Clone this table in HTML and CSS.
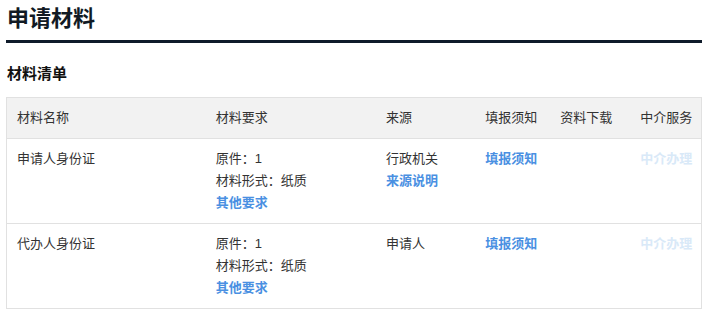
FILE: index.html
```html
<!DOCTYPE html>
<html lang="zh-CN">
<head>
<meta charset="utf-8">
<title>申请材料</title>
<link rel="stylesheet" href="styles.css">
</head>
<body>
<div class="page">
  <h1 class="title">申请材料</h1>
  <h2 class="subtitle">材料清单</h2>
  <table class="materials">
    <colgroup>
      <col class="c-name">
      <col class="c-req">
      <col class="c-src">
      <col class="c-note">
      <col class="c-dl">
      <col class="c-svc">
    </colgroup>
    <thead>
      <tr>
        <th>材料名称</th>
        <th>材料要求</th>
        <th>来源</th>
        <th>填报须知</th>
        <th>资料下载</th>
        <th>中介服务</th>
      </tr>
    </thead>
    <tbody>
      <tr>
        <td>申请人身份证</td>
        <td>
          <div>原件：1</div>
          <div>材料形式：纸质</div>
          <div><a class="link" href="#">其他要求</a></div>
        </td>
        <td>
          <div>行政机关</div>
          <div><a class="link" href="#">来源说明</a></div>
        </td>
        <td><a class="link" href="#">填报须知</a></td>
        <td></td>
        <td><span class="link-disabled">中介办理</span></td>
      </tr>
      <tr>
        <td>代办人身份证</td>
        <td>
          <div>原件：1</div>
          <div>材料形式：纸质</div>
          <div><a class="link" href="#">其他要求</a></div>
        </td>
        <td>
          <div>申请人</div>
        </td>
        <td><a class="link" href="#">填报须知</a></td>
        <td></td>
        <td><span class="link-disabled">中介办理</span></td>
      </tr>
    </tbody>
  </table>
</div>
</body>
</html>
```

FILE: styles.css
```css
html, body {
  margin: 0;
  padding: 0;
  background: #ffffff;
}

body {
  font-family: "Liberation Sans", "Noto Sans CJK SC", sans-serif;
  color: #333333;
  font-size: 13px;
}

.page {
  padding: 0 5px 0 6px;
}

.title {
  margin: 0;
  padding: 4px 1px 6px;
  font-size: 22px;
  line-height: 30px;
  font-weight: bold;
  color: #111a24;
  border-bottom: 3px solid #0f1b2a;
}

.subtitle {
  margin: 20px 0 12px;
  padding-left: 1px;
  font-size: 15px;
  line-height: 22px;
  font-weight: bold;
  color: #111111;
}

.materials {
  width: 696px;
  table-layout: fixed;
  border-collapse: collapse;
  border: 1px solid #e1e1e1;
}

.c-name { width: 199px; }
.c-req { width: 170px; }
.c-src { width: 99px; }
.c-note { width: 75px; }
.c-dl { width: 80px; }
.c-svc { width: 71px; }

.materials th {
  background: #f2f2f2;
  font-weight: normal;
  text-align: left;
  color: #333333;
  padding: 9px 0 9px 10px;
  line-height: 22px;
  border-bottom: 1px solid #e1e1e1;
  white-space: nowrap;
}

.materials td {
  vertical-align: top;
  padding: 9px 0 9px 10px;
  line-height: 22px;
  border-bottom: 1px solid #e1e1e1;
  white-space: nowrap;
}

.link {
  color: #4a90e2;
  font-weight: bold;
  text-decoration: none;
}

.link-disabled {
  color: #d9e9f8;
  font-weight: bold;
}
```
